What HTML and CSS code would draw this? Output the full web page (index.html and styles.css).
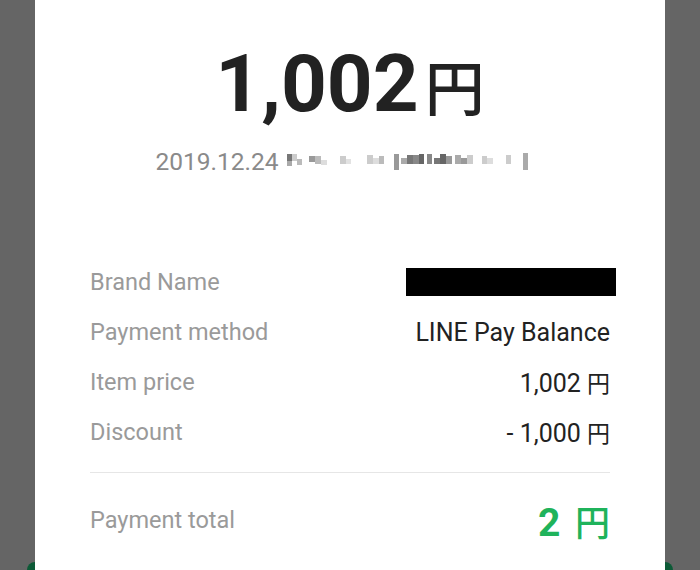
FILE: index.html
```html
<!DOCTYPE html>
<html lang="en">
<head>
  <meta charset="UTF-8" />
  <meta name="viewport" content="width=device-width, initial-scale=1" />
  <title>Payment details</title>
  <link rel="stylesheet" href="styles.css">
</head>
<body>

  <div class="behind-button"></div>

  <main class="receipt">
    <div class="amount">1,002<span class="yen">円</span></div>

    <div class="date">
      2019.12.24
      <!-- mosaic over the time / transaction number -->
      <svg class="mosaic" width="258" height="22" viewBox="0 0 258 22">
        <rect x="0" y="3" width="5" height="7" fill="#777" />
        <rect x="0" y="10" width="5" height="5" fill="#aaa" />
        <rect x="5" y="3" width="5" height="7" fill="#ccc" />
        <rect x="10" y="8" width="5" height="6" fill="#bbb" />
        <rect x="22" y="5" width="6" height="6" fill="#999" />
        <rect x="28" y="5" width="6" height="8" fill="#bbb" />
        <rect x="34" y="9" width="6" height="5" fill="#ddd" />
        <rect x="53" y="5" width="6" height="8" fill="#ccc" />
        <rect x="59" y="8" width="5" height="5" fill="#e2e2e2" />
        <rect x="80" y="4" width="6" height="9" fill="#ccc" />
        <rect x="86" y="7" width="6" height="6" fill="#ddd" />
        <rect x="92" y="5" width="5" height="8" fill="#bbb" />
        <rect x="107" y="3" width="5" height="16" fill="#999" />
        <rect x="114" y="7" width="6" height="6" fill="#aaa" />
        <rect x="120" y="4" width="6" height="9" fill="#777" />
        <rect x="126" y="4" width="6" height="9" fill="#888" />
        <rect x="132" y="3" width="5" height="10" fill="#666" />
        <rect x="140" y="3" width="5" height="10" fill="#888" />
        <rect x="147" y="7" width="6" height="6" fill="#777" />
        <rect x="153" y="3" width="6" height="10" fill="#666" />
        <rect x="159" y="5" width="6" height="8" fill="#999" />
        <rect x="168" y="4" width="6" height="9" fill="#aaa" />
        <rect x="174" y="7" width="6" height="6" fill="#999" />
        <rect x="180" y="4" width="6" height="9" fill="#ccc" />
        <rect x="195" y="5" width="5" height="8" fill="#ccc" />
        <rect x="200" y="7" width="6" height="6" fill="#ddd" />
        <rect x="219" y="4" width="5" height="9" fill="#ccc" />
        <rect x="236" y="2" width="5" height="17" fill="#aaa" />
      </svg>
    </div>

    <dl class="details">
      <div class="row">
        <dt>Brand Name</dt>
        <dd><span class="redacted"></span></dd>
      </div>
      <div class="row">
        <dt>Payment method</dt>
        <dd>LINE Pay Balance</dd>
      </div>
      <div class="row">
        <dt>Item price</dt>
        <dd>1,002 <span class="yen-small">円</span></dd>
      </div>
      <div class="row">
        <dt>Discount</dt>
        <dd>- 1,000 <span class="yen-small">円</span></dd>
      </div>
    </dl>

    <div class="total">
      <span class="total-label">Payment total</span>
      <span class="total-value">2 <span class="yen-total">円</span></span>
    </div>
  </main>

</body>
</html>
```

FILE: styles.css
```css
html, body {
  height: 100%;
}
body {
  margin: 0;
  background-color: #656565;
  font-family: Roboto, "Noto Sans CJK JP", sans-serif;
  color: #222;
  overflow: hidden;
  position: relative;
}
.behind-button {
  position: absolute;
  left: 27px;
  right: 27px;
  top: 562px;
  height: 8px;
  border-radius: 10px 10px 0 0;
  background-color: #0c5a36;
}
.receipt {
  position: relative;
  margin: 0 35px;
  height: 570px;
  background-color: #fff;
  padding: 0 55px;
  box-sizing: border-box;
}
.amount {
  padding-top: 44px;
  font-size: 80px;
  line-height: 1;
  font-weight: 700;
  text-align: center;
  color: #222;
}
.yen {
  font-family: "Noto Sans CJK JP", sans-serif;
  font-size: 60px;
  font-weight: 500;
  margin-left: 6px;
}
.date {
  margin-top: 26px;
  display: flex;
  justify-content: center;
  align-items: center;
  gap: 8px;
  font-size: 24.5px;
  color: #8a8a8a;
  line-height: 24px;
}
.mosaic {
  display: block;
}
.details {
  margin: 83px 0 0 0;
  padding-bottom: 15px;
  border-bottom: 1px solid #e6e6e6;
}
.row {
  display: flex;
  justify-content: space-between;
  align-items: center;
  height: 50px;
}
.row dt {
  font-size: 23.5px;
  color: #9a9a9a;
}
.row dd {
  margin: 0;
  font-size: 25px;
  color: #222;
}
.yen-small {
  font-family: "Noto Sans CJK JP", sans-serif;
  font-size: 23px;
}
.redacted {
  display: block;
  width: 210px;
  height: 28px;
  background-color: #000;
  margin-right: -6px;
}
.total {
  display: flex;
  justify-content: space-between;
  align-items: center;
  height: 94px;
}
.total-label {
  font-size: 23.5px;
  color: #9a9a9a;
}
.total-value {
  font-size: 39px;
  font-weight: 700;
  color: #1fb35b;
}
.yen-total {
  font-family: "Noto Sans CJK JP", sans-serif;
  font-size: 35px;
  font-weight: 500;
  margin-left: 5px;
}
```
